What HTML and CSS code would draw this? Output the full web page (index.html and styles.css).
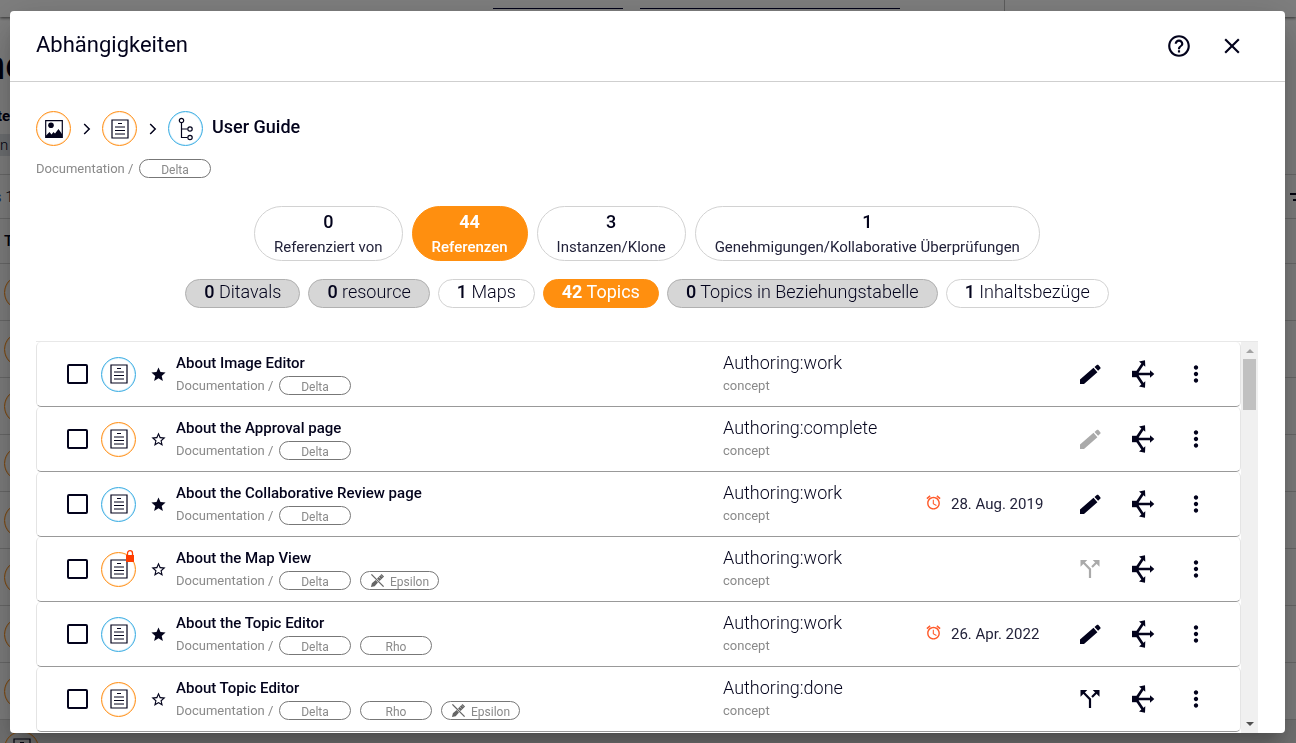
FILE: index.html
```html
<!DOCTYPE html>
<html lang="de">
<head>
<meta charset="utf-8">
<title>Abhängigkeiten</title>
<meta name="viewport" content="width=device-width, initial-scale=1">
<link rel="stylesheet" href="styles.css">
</head>
<body>
<svg class="sprite" aria-hidden="true">
  <symbol id="i-doc" viewBox="0 0 18 20"><path fill="none" stroke="currentColor" stroke-width="1.200" d="M1 1h16v18H1z"/><path fill="none" stroke="currentColor" stroke-width="1.200" d="M7 4.500h4M4 8h10M4 11.500h10M4 15h10"/></symbol>
  <symbol id="i-image" viewBox="0 0 18 18"><path fill="none" stroke="currentColor" stroke-width="1.200" d="M.7.7h16.600v16.600H.7z"/><circle cx="6" cy="5.300" r="2.800" fill="currentColor"/><path fill="currentColor" d="M1 17v-1.500L4.500 12l2 2.500 2-2.500 1.500 1.500L13.500 9l3.500 5V17z"/></symbol>
  <symbol id="i-map" viewBox="0 0 16 24"><g fill="none" stroke="currentColor" stroke-width="1.200"><circle cx="3.500" cy="3.500" r="2.200"/><circle cx="12" cy="12" r="2.200"/><circle cx="12" cy="20.500" r="2.200"/><path d="M3.500 6v14.500h6M3.500 12h6"/></g></symbol>
  <symbol id="i-chevron" viewBox="0 0 8 12"><path fill="none" stroke="currentColor" stroke-width="1.500" d="M1.200 1l5 5-5 5"/></symbol>
  <symbol id="i-help" viewBox="0 0 24 24"><path fill="currentColor" d="M11 18h2v-2h-2v2zm1-16C6.480 2 2 6.480 2 12s4.480 10 10 10 10-4.480 10-10S17.520 2 12 2zm0 18c-4.410 0-8-3.590-8-8s3.590-8 8-8 8 3.590 8 8-3.590 8-8 8zm0-14c-2.210 0-4 1.790-4 4h2c0-1.100.9-2 2-2s2 .9 2 2c0 2-3 1.750-3 5h2c0-2.250 3-2.500 3-5 0-2.210-1.790-4-4-4z"/></symbol>
  <symbol id="i-close" viewBox="0 0 24 24"><path fill="currentColor" d="M19 6.410L17.590 5 12 10.590 6.410 5 5 6.410 10.590 12 5 17.590 6.410 19 12 13.410 17.590 19 19 17.590 13.410 12z"/></symbol>
  <symbol id="i-star" viewBox="0 0 24 24"><path fill="currentColor" d="M12 17.270L18.180 21l-1.640-7.030L22 9.240l-7.190-.61L12 2 9.190 8.630 2 9.240l5.460 4.730L5.820 21z"/></symbol>
  <symbol id="i-star-o" viewBox="0 0 24 24"><path fill="currentColor" d="M22 9.240l-7.190-.62L12 2 9.190 8.630 2 9.240l5.460 4.730L5.820 21 12 17.270 18.180 21l-1.630-7.030L22 9.240zM12 15.400l-3.760 2.270 1-4.280-3.320-2.880 4.380-.38L12 6.100l1.710 4.040 4.380.38-3.320 2.880 1 4.280L12 15.400z"/></symbol>
  <symbol id="i-pencil" viewBox="0 0 22 20"><path fill="currentColor" d="M1 15.500L14.500 3.800l3.900 4.400L5 20H1zM15.500 3l2.300-2c.5-.4 1.200-.4 1.600.1l1.900 2.200c.4.500.4 1.100-.1 1.500l-2.100 2z"/></symbol>
  <symbol id="i-refs" viewBox="0 0 24 28"><path fill="currentColor" d="M1 10.800h6.500v6.400H1z"/><path fill="none" stroke="currentColor" stroke-width="2.700" d="M5 14h15M6 12.500l6-9M6 15.500l6 9"/><path fill="currentColor" d="M19 10.200l4.300 3.800-4.300 3.800zM8 1.600l6-1.300.3 6.400zM8 26.400l6 1.300.3-6.400z"/></symbol>
  <symbol id="i-more" viewBox="0 0 24 24"><path fill="currentColor" d="M12 8c1.100 0 2-.9 2-2s-.9-2-2-2-2 .9-2 2 .9 2 2 2zm0 2c-1.100 0-2 .9-2 2s.9 2 2 2 2-.9 2-2-.9-2-2-2zm0 6c-1.100 0-2 .9-2 2s.9 2 2 2 2-.9 2-2-.9-2-2-2z"/></symbol>
  <symbol id="i-split" viewBox="0 0 20 20"><path fill="none" stroke="currentColor" stroke-width="2.200" d="M3 3l7 7.200V19M17 3l-5 5"/><path fill="currentColor" d="M.5 1h6.800L.5 7.800zM19.500 1h-6.800l6.800 6.800z"/></symbol>
  <symbol id="i-alarm" viewBox="0 0 24 24"><path fill="currentColor" d="M22 5.720l-4.600-3.860-1.290 1.530 4.600 3.860L22 5.720zM7.880 3.390L6.600 1.860 2 5.710l1.290 1.530 4.590-3.850zM12.500 8H11v6l4.750 2.850.75-1.230-4-2.370V8zM12 4c-4.970 0-9 4.030-9 9s4.020 9 9 9c4.970 0 9-4.030 9-9s-4.030-9-9-9zm0 16c-3.870 0-7-3.130-7-7s3.130-7 7-7 7 3.130 7 7-3.130 7-7 7z"/></symbol>
  <symbol id="i-lock" viewBox="0 0 10 12"><path fill="currentColor" d="M1 5h8v7H1z"/><path fill="none" stroke="currentColor" stroke-width="1.300" d="M2.500 5.500V3.200a2.500 2.500 0 0 1 5 0v2.300"/></symbol>
  <symbol id="i-design" viewBox="0 0 16 16"><path fill="none" stroke="currentColor" stroke-width="1.400" d="M1.500 1.500l13 13"/><path fill="currentColor" d="M1 15l1-4 4-3.500L8.500 10 5 14zM7.500 5.800L12.300 1l2.700 2.700L10.200 8.500z"/><path stroke="#fff" stroke-width=".6" d="M9.500 4.300l1.600 1.600M11.500 2.500l1.500 1.500"/></symbol>
  <symbol id="i-filter" viewBox="0 0 6 8"><path fill="currentColor" d="M0 0h6v2H0zM3 6h3v2H3z"/></symbol>
</svg>

<div class="page" aria-hidden="true">
  <div class="topbar"><span class="tab tab-short"></span><span class="tab tab-long"></span><span class="topbar-end"></span></div>
  <div class="page-title">ne</div>
  <div class="page-label">te</div>
  <div class="page-field">n</div>
  <div class="page-count"><span><span class="page-link">s</span> 1</span><svg class="filter"><use href="#i-filter"/></svg></div>
  <div class="page-head">T</div>
  <div class="page-row"><span class="ring orange"></span></div>
  <div class="page-row"><span class="ring orange"></span></div>
  <div class="page-row"><span class="ring orange"></span></div>
  <div class="page-row"><span class="ring orange"></span></div>
  <div class="page-row"><span class="ring orange"></span></div>
  <div class="page-row"><span class="ring orange"></span></div>
  <div class="page-row"><span class="ring orange"></span></div>
  <div class="page-row"><span class="ring orange"></span></div>
  <div class="page-row page-row-last"><span class="ring orange"><svg class="doc"><use href="#i-doc"/></svg></span></div>
</div>

<div class="backdrop">
<section class="dialog" role="dialog" aria-labelledby="dialog-title">
  <header class="dialog-head">
    <h1 id="dialog-title">Abhängigkeiten</h1>
    <button class="head-button" aria-label="Hilfe"><svg><use href="#i-help"/></svg></button>
    <button class="head-button" aria-label="Schließen"><svg><use href="#i-close"/></svg></button>
  </header>
  <div class="dialog-body">
    <nav class="crumbs" aria-label="Pfad">
      <a href="#" class="ring orange" aria-label="Bild"><svg class="image"><use href="#i-image"/></svg></a>
      <svg class="chevron"><use href="#i-chevron"/></svg>
      <a href="#" class="ring orange" aria-label="Topic"><svg class="doc"><use href="#i-doc"/></svg></a>
      <svg class="chevron"><use href="#i-chevron"/></svg>
      <a href="#" class="ring blue" aria-label="Map"><svg class="map"><use href="#i-map"/></svg></a>
      <h2>User Guide</h2>
    </nav>
    <div class="path"><span>Documentation /</span><span class="tag">Delta</span></div>

    <div class="chips">
      <button class="chip"><b>0</b><span>Referenziert von</span></button>
      <button class="chip active"><b>44</b><span>Referenzen</span></button>
      <button class="chip"><b>3</b><span>Instanzen/Klone</span></button>
      <button class="chip"><b>1</b><span>Genehmigungen/Kollaborative Überprüfungen</span></button>
    </div>
    <div class="filters">
      <button class="pill" disabled><b>0</b> Ditavals</button>
      <button class="pill" disabled><b>0</b> resource</button>
      <button class="pill"><b>1</b> Maps</button>
      <button class="pill active"><b>42</b> Topics</button>
      <button class="pill" disabled><b>0</b> Topics in Beziehungstabelle</button>
      <button class="pill"><b>1</b> Inhaltsbezüge</button>
    </div>

    <div class="list">
      <ul class="rows">
        <li class="row">
          <input type="checkbox" aria-labelledby="t1">
          <span class="ring blue"><svg class="doc"><use href="#i-doc"/></svg></span>
          <button class="star" aria-label="Favorit"><svg><use href="#i-star"/></svg></button>
          <div class="info"><h3 id="t1">About Image Editor</h3><div class="path"><span>Documentation /</span><span class="tag">Delta</span></div></div>
          <div class="status"><p>Authoring:work</p><small>concept</small></div>
          <div class="due"></div>
          <div class="actions"><button aria-label="Bearbeiten"><svg class="pencil"><use href="#i-pencil"/></svg></button><button aria-label="Abhängigkeiten"><svg class="refs"><use href="#i-refs"/></svg></button><button aria-label="Mehr"><svg class="more"><use href="#i-more"/></svg></button></div>
        </li>
        <li class="row">
          <input type="checkbox" aria-labelledby="t2">
          <span class="ring orange"><svg class="doc"><use href="#i-doc"/></svg></span>
          <button class="star" aria-label="Favorit"><svg><use href="#i-star-o"/></svg></button>
          <div class="info"><h3 id="t2">About the Approval page</h3><div class="path"><span>Documentation /</span><span class="tag">Delta</span></div></div>
          <div class="status"><p>Authoring:complete</p><small>concept</small></div>
          <div class="due"></div>
          <div class="actions"><button aria-label="Bearbeiten" disabled><svg class="pencil"><use href="#i-pencil"/></svg></button><button aria-label="Abhängigkeiten"><svg class="refs"><use href="#i-refs"/></svg></button><button aria-label="Mehr"><svg class="more"><use href="#i-more"/></svg></button></div>
        </li>
        <li class="row">
          <input type="checkbox" aria-labelledby="t3">
          <span class="ring blue"><svg class="doc"><use href="#i-doc"/></svg></span>
          <button class="star" aria-label="Favorit"><svg><use href="#i-star"/></svg></button>
          <div class="info"><h3 id="t3">About the Collaborative Review page</h3><div class="path"><span>Documentation /</span><span class="tag">Delta</span></div></div>
          <div class="status"><p>Authoring:work</p><small>concept</small></div>
          <div class="due"><svg><use href="#i-alarm"/></svg><time datetime="2019-08-28">28. Aug. 2019</time></div>
          <div class="actions"><button aria-label="Bearbeiten"><svg class="pencil"><use href="#i-pencil"/></svg></button><button aria-label="Abhängigkeiten"><svg class="refs"><use href="#i-refs"/></svg></button><button aria-label="Mehr"><svg class="more"><use href="#i-more"/></svg></button></div>
        </li>
        <li class="row">
          <input type="checkbox" aria-labelledby="t4">
          <span class="ring orange"><svg class="doc"><use href="#i-doc"/></svg><svg class="lock"><use href="#i-lock"/></svg></span>
          <button class="star" aria-label="Favorit"><svg><use href="#i-star-o"/></svg></button>
          <div class="info"><h3 id="t4">About the Map View</h3><div class="path"><span>Documentation /</span><span class="tag">Delta</span><span class="tag"><svg><use href="#i-design"/></svg>Epsilon</span></div></div>
          <div class="status"><p>Authoring:work</p><small>concept</small></div>
          <div class="due"></div>
          <div class="actions"><button aria-label="Verzweigen" disabled><svg class="split"><use href="#i-split"/></svg></button><button aria-label="Abhängigkeiten"><svg class="refs"><use href="#i-refs"/></svg></button><button aria-label="Mehr"><svg class="more"><use href="#i-more"/></svg></button></div>
        </li>
        <li class="row">
          <input type="checkbox" aria-labelledby="t5">
          <span class="ring blue"><svg class="doc"><use href="#i-doc"/></svg></span>
          <button class="star" aria-label="Favorit"><svg><use href="#i-star"/></svg></button>
          <div class="info"><h3 id="t5">About the Topic Editor</h3><div class="path"><span>Documentation /</span><span class="tag">Delta</span><span class="tag">Rho</span></div></div>
          <div class="status"><p>Authoring:work</p><small>concept</small></div>
          <div class="due"><svg><use href="#i-alarm"/></svg><time datetime="2022-04-26">26. Apr. 2022</time></div>
          <div class="actions"><button aria-label="Bearbeiten"><svg class="pencil"><use href="#i-pencil"/></svg></button><button aria-label="Abhängigkeiten"><svg class="refs"><use href="#i-refs"/></svg></button><button aria-label="Mehr"><svg class="more"><use href="#i-more"/></svg></button></div>
        </li>
        <li class="row">
          <input type="checkbox" aria-labelledby="t6">
          <span class="ring orange"><svg class="doc"><use href="#i-doc"/></svg></span>
          <button class="star" aria-label="Favorit"><svg><use href="#i-star-o"/></svg></button>
          <div class="info"><h3 id="t6">About Topic Editor</h3><div class="path"><span>Documentation /</span><span class="tag">Delta</span><span class="tag">Rho</span><span class="tag"><svg><use href="#i-design"/></svg>Epsilon</span></div></div>
          <div class="status"><p>Authoring:done</p><small>concept</small></div>
          <div class="due"></div>
          <div class="actions"><button aria-label="Verzweigen"><svg class="split"><use href="#i-split"/></svg></button><button aria-label="Abhängigkeiten"><svg class="refs"><use href="#i-refs"/></svg></button><button aria-label="Mehr"><svg class="more"><use href="#i-more"/></svg></button></div>
        </li>
      </ul>
      <div class="scrollbar" aria-hidden="true"><span class="arrow up"></span><span class="thumb"></span><span class="arrow down"></span></div>
    </div>
  </div>
</section>
</div>
</body>
</html>
```

FILE: styles.css
```css
:root {
  --ink: #03031c;
  --ink-soft: #22223a;
  --orange: #ff8f0f;
  --ring-orange: #ff9420;
  --blue: #42b0e4;
  --muted: #8a8a8a;
}

* { box-sizing: border-box; }

body {
  margin: 0;
  height: 100vh;
  overflow: hidden;
  background: #fff;
  color: var(--ink);
  font-family: Roboto, "Liberation Sans", sans-serif;
  font-size: 15px;
  font-weight: 300;
}

h1, h2, h3, p, ul { margin: 0; padding: 0; }
button { margin: 0; padding: 0; border: 0; background: none; color: inherit; font: inherit; }
svg { display: block; flex: none; }
b { font-weight: 500; }
.sprite { display: none; }

/* Page behind the dialog */
.page { height: 100vh; overflow: hidden; }
.topbar {
  display: flex;
  gap: 17px;
  height: 17px;
  padding-left: 493px;
  box-shadow: 0 1px 3px rgba(0, 0, 0, .6);
}
.tab { height: 9px; border-bottom: 1px solid #000030; }
.tab-short { width: 130px; }
.tab-long { width: 260px; }
.topbar-end { margin-left: 87px; border-left: 1px solid #bbb; }
.page-title { margin: 26px 0 0 -17px; font-size: 40px; line-height: 46px; font-weight: 500; }
.page-label { margin-top: 17px; font-weight: 700; line-height: 20px; margin-left: -3px; }
.page-field { width: 50%; margin-top: 8px; height: 22px; line-height: 22px; background: #dde1e6; }
.page-count {
  display: flex;
  justify-content: space-between;
  align-items: center;
  margin-top: 18px;
  height: 45px;
  border: solid #d4d4d4;
  border-width: 1px 0;
  margin-left: -6px;
}
.page-link { color: #0040c0; }
.filter { width: 6px; height: 8px; }
.page-head { height: 45px; padding-left: 4px; line-height: 44px; font-weight: 500; border-bottom: 1px solid #d4d4d4; }
.page-row { display: flex; align-items: center; height: 57px; padding-left: 4px; border-bottom: 1px solid #d4d4d4; }
.page-row-last { background: #e8e8e8; }

/* Dialog */
.backdrop {
  position: fixed;
  inset: 0;
  display: flex;
  padding: 11px 11px 10px 10px;
  background: rgba(0, 0, 0, .5);
}
.dialog {
  flex: 1;
  display: flex;
  flex-direction: column;
  min-width: 0;
  overflow: hidden;
  border-radius: 4px;
  background: #fff;
  box-shadow: 0 11px 15px -7px rgba(0, 0, 0, .2), 0 24px 38px 3px rgba(0, 0, 0, .14), 0 9px 46px 8px rgba(0, 0, 0, .12);
}
.dialog-head {
  display: flex;
  align-items: center;
  gap: 21px;
  height: 71px;
  flex: none;
  padding: 0 37px 0 26px;
  border-bottom: 1px solid #cfcfcf;
}
.dialog-head h1 { flex: 1; font-size: 22px; line-height: 30px; font-weight: 400; padding-bottom: 2px; }
.head-button { width: 32px; height: 32px; display: grid; place-items: center; }
.head-button svg { width: 26px; height: 26px; }

.dialog-body {
  flex: 1;
  display: flex;
  flex-direction: column;
  min-height: 0;
  padding: 29px 27px 0 26px;
}

.crumbs { display: flex; align-items: center; }
.crumbs h2 { margin-left: 9px; padding-bottom: 3px; font-size: 18px; line-height: 24px; font-weight: 500; }
.chevron { width: 8px; height: 12px; margin: 0 11px 0 12px; }
.ring {
  position: relative;
  display: grid;
  place-items: center;
  flex: none;
  width: 35px;
  height: 35px;
  border: 1px solid;
  border-radius: 50%;
}
.ring svg { color: var(--ink); }
.ring.orange { border-color: var(--ring-orange); box-shadow: inset 0 0 1px var(--ring-orange); }
.ring.blue { border-color: var(--blue); box-shadow: inset 0 0 1px var(--blue); }
.doc { width: 18px; height: 20px; }
.image { width: 18px; height: 18px; }
.map { width: 16px; height: 24px; }
.ring .lock { position: absolute; top: -3px; right: 0; width: 10px; height: 12px; color: #ff3d00; }

.path { display: flex; align-items: center; gap: 9px; color: var(--muted); font-size: 13px; line-height: 19px; font-weight: 400; white-space: nowrap; }
.path > span:first-child { width: 94px; }
.crumbs + .path { margin-top: 13px; }
.tag {
  display: inline-flex;
  align-items: center;
  justify-content: center;
  gap: 5px;
  min-width: 72px;
  height: 19px;
  padding: 2px 9px 0;
  border: 1px solid #777;
  border-radius: 10px;
  font-size: 12px;
  line-height: 16px;
}
.tag svg { width: 15px; height: 15px; margin-bottom: 2px; color: #666; }

.chips, .filters { display: flex; justify-content: center; }
.chips { gap: 9px; margin-top: 28px; }
.chip {
  display: flex;
  flex-direction: column;
  align-items: center;
  height: 55px;
  padding: 3px 19px 0;
  border: 1px solid #d2d2d2;
  border-radius: 28px;
  color: var(--ink-soft);
  font-weight: 400;
}
.chip b { font-size: 18px; line-height: 24px; color: var(--ink); }
.chip span { font-size: 15px; line-height: 26px; }
.filters { gap: 8px; margin-top: 18px; }
.pill {
  height: 29px;
  padding: 0 18px 3px;
  border: 1px solid #d2d2d2;
  border-radius: 15px;
  font-size: 18px;
  line-height: 24px;
}
.pill:disabled { border-color: #b0b0b0; background: #d6d6d6; }
.chip.active, .pill.active { border-color: var(--orange); background: var(--orange); color: #fff; }
.chip.active { font-weight: 500; }
.pill.active { font-weight: 400; }
.active b { color: #fff; font-weight: 700; }

/* Result list */
.list { display: flex; flex: 1; min-height: 0; margin-top: 33px; border-top: 1px solid #e8e8e8; }
.rows { flex: 1; min-width: 0; overflow: hidden; list-style: none; }
.row {
  display: grid;
  grid-template-columns: 34px 49px 26px minmax(0, 547fr) minmax(0, 202fr) 149px auto;
  align-items: center;
  height: 65px;
  padding: 0 28px 0 30px;
  border: 1px solid #e4e4e4;
  border-top: 0;
  border-bottom-color: #999;
  border-radius: 5px;
}
.row input {
  appearance: none;
  width: 21px;
  height: 20px;
  margin: 0;
  border: 2px solid var(--ink);
  border-radius: 2px;
}
.star svg { width: 17px; height: 17px; }
.info { padding-bottom: 1px; }
.info h3 { font-size: 15px; line-height: 22px; font-weight: 500; margin-bottom: 2px; }
.status { padding-bottom: 1px; }
.status p { font-size: 18px; line-height: 24px; }
.status small { display: block; color: var(--muted); font-size: 13px; line-height: 21px; font-weight: 400; }
.due { display: flex; align-items: center; gap: 9px; color: var(--ink-soft); font-size: 15px; font-weight: 400; }
.due svg { width: 17px; height: 17px; margin-bottom: 3px; color: #ff5a2a; }
.actions { display: flex; gap: 21px; }
.actions button { display: grid; place-items: center; width: 32px; height: 32px; }
.actions button:disabled { color: #aaa; }
.pencil { width: 22px; height: 20px; }
.refs { width: 24px; height: 28px; }
.more { width: 26px; height: 26px; }
.split { width: 20px; height: 20px; }

.scrollbar { display: flex; flex-direction: column; align-items: center; width: 17px; padding: 7px 0; background: #f0f0f0; }
.thumb { width: 13px; height: 51px; margin-top: 6px; background: #c1c1c1; }
.arrow { border: solid transparent; border-width: 0 4px; }
.arrow.up { border-bottom: 4px solid #a3a3a3; }
.arrow.down { margin-top: auto; border-top: 4px solid #505050; }
```
